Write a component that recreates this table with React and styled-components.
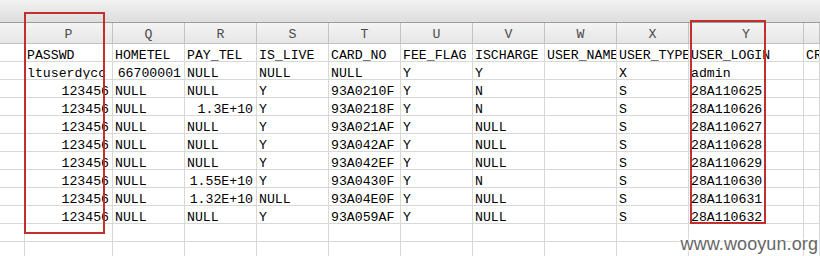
import React from "react";
import styled, { createGlobalStyle } from "styled-components";

const Global = createGlobalStyle`
  html, body { margin: 0; padding: 0; background: #ffffff; }
  body { width: 820px; height: 256px; overflow: hidden; }
`;

const COLS = [
  { letter: "", w: 25 },
  { letter: "P", w: 88 },
  { letter: "Q", w: 72 },
  { letter: "R", w: 72 },
  { letter: "S", w: 72 },
  { letter: "T", w: 72 },
  { letter: "U", w: 72 },
  { letter: "V", w: 72 },
  { letter: "W", w: 72 },
  { letter: "X", w: 72 },
  { letter: "Y", w: 115 },
  { letter: "", w: 0 },
];

const R = (v) => ({ v, r: true });

const ROWS = [
  ["", "PASSWD", "HOMETEL", "PAY_TEL", "IS_LIVE", "CARD_NO", "FEE_FLAG", "ISCHARGE", "USER_NAME", "USER_TYPE", "USER_LOGIN", "CR"],
  ["", "ltuserdycc", R("66700001"), "NULL", "NULL", "NULL", "Y", "Y", "", "X", "admin", ""],
  ["", R("123456"), "NULL", "NULL", "Y", "93A0210F", "Y", "N", "", "S", "28A110625", ""],
  ["", R("123456"), "NULL", R("1.3E+10"), "Y", "93A0218F", "Y", "N", "", "S", "28A110626", ""],
  ["", R("123456"), "NULL", "NULL", "Y", "93A021AF", "Y", "NULL", "", "S", "28A110627", ""],
  ["", R("123456"), "NULL", "NULL", "Y", "93A042AF", "Y", "NULL", "", "S", "28A110628", ""],
  ["", R("123456"), "NULL", "NULL", "Y", "93A042EF", "Y", "NULL", "", "S", "28A110629", ""],
  ["", R("123456"), "NULL", R("1.55E+10"), "Y", "93A0430F", "Y", "N", "", "S", "28A110630", ""],
  ["", R("123456"), "NULL", R("1.32E+10"), "NULL", "93A04E0F", "Y", "NULL", "", "S", "28A110631", ""],
  ["", R("123456"), "NULL", "NULL", "Y", "93A059AF", "Y", "NULL", "", "S", "28A110632", ""],
  ["", "", "", "", "", "", "", "", "", "", "", ""],
  ["", "", "", "", "", "", "", "", "", "", "", ""],
];

const Page = styled.div`
  position: relative;
  width: 820px;
  height: 256px;
  overflow: hidden;
  background: #ffffff;
`;

const Ribbon = styled.div`
  height: 22px;
  background: linear-gradient(#f1f1f1, #dedede);
  border-bottom: 1px solid #9c9c9c;
`;

const Sheet = styled.div`
  display: grid;
  grid-template-columns: ${COLS.map((c) => (c.w ? `${c.w}px` : "1fr")).join(" ")};
  font-family: "Liberation Mono", "Courier New", monospace;
  font-size: 13.2px;
  color: #000;
`;

const ColHead = styled.div`
  box-sizing: border-box;
  height: 21px;
  line-height: 20px;
  padding-top: 2px;
  text-align: center;
  color: #4a4a4a;
  background: linear-gradient(#f4f4f4, #e6e6e6);
  border-right: 1px solid #c4c4c4;
  border-bottom: 1px solid #c2c2c2;
  overflow: hidden;
`;

const Cell = styled.div`
  box-sizing: border-box;
  height: 18px;
  line-height: 17px;
  padding: 3px 3px 0 2px;
  text-align: ${(p) => (p.$right ? "right" : "left")};
  white-space: nowrap;
  overflow: hidden;
  border-right: 1px solid #d8d8d8;
  border-bottom: 1px solid #d8d8d8;
`;

const Highlight = styled.div`
  position: absolute;
  box-sizing: border-box;
  border: 2px solid #c0302e;
  pointer-events: none;
  left: ${(p) => p.$x}px;
  top: ${(p) => p.$y}px;
  width: ${(p) => p.$w}px;
  height: ${(p) => p.$h}px;
`;

const Watermark = styled.div`
  position: absolute;
  right: 2px;
  bottom: 1px;
  font-family: "Liberation Sans", Arial, sans-serif;
  font-size: 18px;
  color: #666666;
  letter-spacing: 0.1px;
  text-shadow: 0 0 2px #ffffff, 0 0 2px #ffffff, 0 0 3px #ffffff, 0 0 4px #ffffff,
    0 0 4px #ffffff;
`;

export default function App() {
  return (
    <Page>
      <Global />
      <Ribbon />
      <Sheet>
        {COLS.map((c, i) => (
          <ColHead key={`h${i}`}>{c.letter}</ColHead>
        ))}
        {ROWS.map((row, ri) =>
          row.map((cell, ci) => {
            const isObj = typeof cell === "object";
            return (
              <Cell key={`${ri}-${ci}`} $right={isObj && cell.r}>
                {isObj ? cell.v : cell}
              </Cell>
            );
          })
        )}
      </Sheet>
      <Highlight $x={24} $y={12} $w={81} $h={222} />
      <Highlight $x={690} $y={20} $w={76} $h={204} />
      <Watermark>www.wooyun.org</Watermark>
    </Page>
  );
}
